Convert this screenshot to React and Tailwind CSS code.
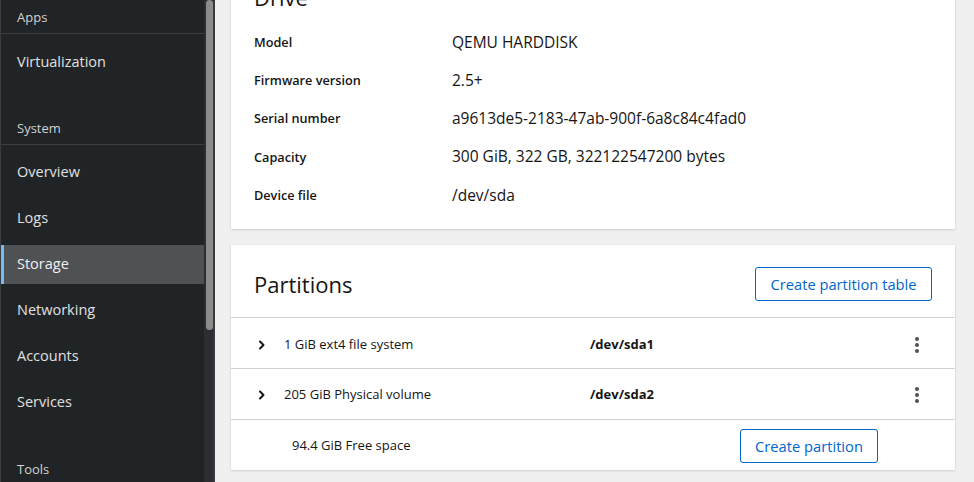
import React from 'react';

const font = { fontFamily: '"Open Sans", "Liberation Sans", sans-serif' };

const driveInfo = [
  { label: 'Model', value: 'QEMU HARDDISK' },
  { label: 'Firmware version', value: '2.5+' },
  { label: 'Serial number', value: 'a9613de5-2183-47ab-900f-6a8c84c4fad0' },
  { label: 'Capacity', value: '300 GiB, 322 GB, 322122547200 bytes' },
  { label: 'Device file', value: '/dev/sda' },
];

const partitions = [
  { name: '1 GiB ext4 file system', device: '/dev/sda1' },
  { name: '205 GiB Physical volume', device: '/dev/sda2' },
];

const Chevron = () => (
  <svg width="8" height="10" viewBox="0 0 8 10" fill="none">
    <path d="M2 1.5 L5.5 5 L2 8.5" stroke="#151515" strokeWidth="2" strokeLinecap="round" strokeLinejoin="round" />
  </svg>
);

const Kebab = () => (
  <svg width="6" height="18" viewBox="0 0 6 18" fill="#4f5255">
    <circle cx="3" cy="3" r="2" />
    <circle cx="3" cy="9" r="2" />
    <circle cx="3" cy="15" r="2" />
  </svg>
);

// each nav row is 46px tall, the link itself 39px
const NavItem = ({ label, active, className = '' }) => (
  <div className={`h-[46px] shrink-0 flex items-center ${className}`}>
    <div
      className={`w-full h-[39px] flex items-center text-[14.5px] ${
        active ? 'bg-[#4f5255] border-l-[3px] border-[#73bcf7] pl-[13px] text-[#f0f0f0]' : 'pl-4 text-[#e0e0e0]'
      }`}
    >
      {label}
    </div>
  </div>
);

const SectionTitle = ({ label, className = '' }) => (
  <div className={`h-[34px] shrink-0 pt-[2px] flex items-center pl-4 text-[13px] text-[#d2d2d2] border-b border-[#3c3f42] ${className}`}>
    {label}
  </div>
);

export default function App() {
  return (
    <div className="flex w-[974px] h-[482px] overflow-hidden bg-[#f0f0f0]" style={font}>
      {/* Sidebar */}
      <div className="w-[204px] shrink-0 bg-[#212427] flex flex-col overflow-hidden border-l border-[#3a3d40]">
        <SectionTitle label="Apps" />
        <NavItem label="Virtualization" className="mt-[5px]" />
        <SectionTitle label="System" className="mt-[26px]" />
        <NavItem label="Overview" className="mt-[4px]" />
        <NavItem label="Logs" />
        <NavItem label="Storage" active />
        <NavItem label="Networking" />
        <NavItem label="Accounts" />
        <NavItem label="Services" />
        <div className="mt-[27px] h-[34px] shrink-0 pt-[2px] flex items-center pl-4 text-[13px] text-[#d2d2d2]">Tools</div>
      </div>

      {/* Scrollbar */}
      <div className="w-[11px] shrink-0 bg-[#2c2e31] border-r-2 border-[#3a3a3a] pl-[2px]">
        <div className="w-[7px] h-[330px] rounded-full bg-[#8a8c8e]" />
      </div>

      {/* Main */}
      <div className="flex-1 pl-[16px] pr-[19px] flex flex-col gap-4">
        {/* Drive card */}
        <div className="-mt-[42px] shrink-0 bg-white shadow-[0_1px_2px_rgba(3,3,3,0.12),0_0_2px_rgba(3,3,3,0.06)] pt-[24px] pb-[15px] px-[23px]">
          <h2 className="text-[22px] leading-[30px] text-[#151515]">Drive</h2>
          <div className="mt-[11px]">
            {driveInfo.map(row => (
              <div key={row.label} className="h-[38.3px] flex items-center">
                <div className="w-[198px] text-[12.7px] font-semibold text-[#151515]">{row.label}</div>
                <div className="text-[15.5px] text-[#151515]">{row.value}</div>
              </div>
            ))}
          </div>
        </div>

        {/* Partitions card */}
        <div className="shrink-0 bg-white shadow-[0_1px_2px_rgba(3,3,3,0.12),0_0_2px_rgba(3,3,3,0.06)]">
          <div className="h-[73px] pt-[6px] flex items-center justify-between px-[23px] border-b border-[#d2d2d2]">
            <h2 className="text-[22px] text-[#151515]">Partitions</h2>
            <button className="h-[34px] w-[177px] border border-[#0066cc] rounded-[3px] text-[14.7px] text-[#0066cc]">
              Create partition table
            </button>
          </div>
          {partitions.map((p, i) => (
            <div key={p.device} className={`h-[51px] ${i === 0 ? 'pt-[3px]' : 'pt-[1px]'} flex items-center px-[23px] border-b border-[#d2d2d2]`}>
              <div className="w-[30px] pl-[4px] flex items-center">
                <Chevron />
              </div>
              <div className="w-[306px] text-[13px] text-[#151515]">{p.name}</div>
              <div className="flex-1 text-[13px] font-bold text-[#151515]">{p.device}</div>
              <div className="w-[30px] flex justify-center">
                <Kebab />
              </div>
            </div>
          ))}
          <div className="h-[50px] pt-[1px] flex items-center pl-[61px] pr-[77px]">
            <div className="text-[13px] text-[#151515]">94.4 GiB Free space</div>
            <button className="ml-auto h-[34px] w-[138px] border border-[#0066cc] rounded-[3px] text-[14.7px] text-[#0066cc]">
              Create partition
            </button>
          </div>
        </div>
      </div>
    </div>
  );
}
